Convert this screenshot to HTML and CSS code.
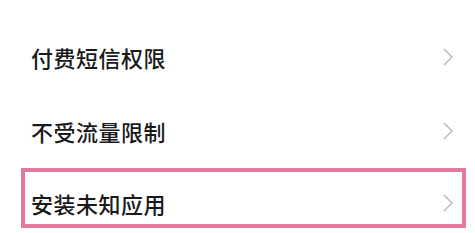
FILE: index.html
```html
<!DOCTYPE html>
<html lang="zh-CN">
<head>
<meta charset="utf-8">
<link rel="stylesheet" href="styles.css">
</head>
<body>
<div class="list">
  <div class="row row-first">
    <span class="label">付费短信权限</span>
    <svg class="chev" width="10" height="18" viewBox="0 0 10 18"><polyline points="1,1 9,9 1,17" fill="none" stroke="#b8b8b8" stroke-width="1.4"/></svg>
  </div>
  <div class="row row-second">
    <span class="label">不受流量限制</span>
    <svg class="chev" width="10" height="18" viewBox="0 0 10 18"><polyline points="1,1 9,9 1,17" fill="none" stroke="#b8b8b8" stroke-width="1.4"/></svg>
  </div>
  <div class="row row-highlight">
    <span class="label">安装未知应用</span>
    <svg class="chev" width="10" height="18" viewBox="0 0 10 18"><polyline points="1,1 9,9 1,17" fill="none" stroke="#b8b8b8" stroke-width="1.4"/></svg>
  </div>
</div>
</body>
</html>
```
FILE: styles.css
```css
html, body {
  margin: 0;
  padding: 0;
  background: #ffffff;
}
body {
  width: 475px;
  height: 233px;
  overflow: hidden;
  font-family: "Noto Sans CJK SC", "Noto Sans", sans-serif;
}
.list {
  display: flex;
  flex-direction: column;
  padding-top: 19px;
}
.row {
  display: flex;
  align-items: center;
  justify-content: space-between;
  box-sizing: border-box;
  padding-left: 31px;
  padding-right: 22px;
}
.row-first {
  height: 75px;
}
.row-second {
  height: 74px;
}
.row-highlight {
  height: 60px;
  margin-left: 21px;
  margin-right: 9px;
  border: 4px solid #e47a9f;
  padding-left: 6px;
  padding-right: 9px;
  padding-top: 10px;
}
.label {
  font-size: 22px;
  line-height: 22px;
  font-weight: 500;
  color: #1a1a1a;
  letter-spacing: 0.5px;
}
.chev {
  display: block;
}
```
